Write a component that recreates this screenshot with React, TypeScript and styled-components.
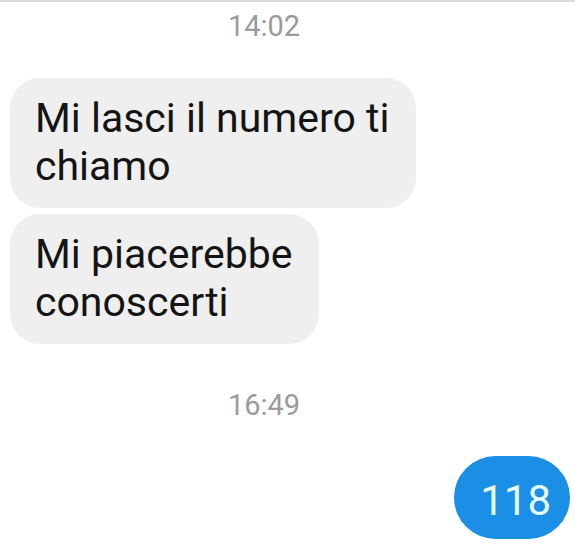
import React from "react";
import styled, { createGlobalStyle } from "styled-components";

type Message = {
  id: number;
  lines: string[];
  mine?: boolean;
};

type Group = {
  time: string;
  messages: Message[];
};

const CHAT: Group[] = [
  {
    time: "14:02",
    messages: [
      { id: 1, lines: ["Mi lasci il numero ti", "chiamo"] },
      { id: 2, lines: ["Mi piacerebbe", "conoscerti"] },
    ],
  },
  {
    time: "16:49",
    messages: [{ id: 3, lines: ["118"], mine: true }],
  },
];

const GlobalStyle = createGlobalStyle`
  html, body {
    margin: 0;
    padding: 0;
    background: #fff;
  }
  body {
    font-family: Roboto, "Liberation Sans", Arial, sans-serif;
  }
`;

const App = () => {
  return (
    <>
      <GlobalStyle />
      <Screen>
        {CHAT.map((group) => (
          <GroupBlock key={group.time}>
            <TimeStamp>{group.time}</TimeStamp>
            <Messages>
              {group.messages.map((msg) => (
                <Bubble key={msg.id} $mine={msg.mine}>
                  {msg.lines.map((line, i) => (
                    <React.Fragment key={i}>
                      {i > 0 && <br />}
                      {line}
                    </React.Fragment>
                  ))}
                </Bubble>
              ))}
            </Messages>
          </GroupBlock>
        ))}
      </Screen>
    </>
  );
};

export default App;

const Screen = styled.div`
  width: 575px;
  height: 552px;
  box-sizing: border-box;
  border-top: 2px solid #dcdcdc;
  padding: 6px 5px 0 10px;
  display: flex;
  flex-direction: column;
  gap: 43px;
  overflow: hidden;
`;

const GroupBlock = styled.section`
  display: flex;
  flex-direction: column;
  gap: 34px;
`;

const TimeStamp = styled.div`
  width: 508px;
  text-align: center;
  font-size: 29px;
  line-height: 36px;
  color: #9b9b9b;
`;

const Messages = styled.div`
  display: flex;
  flex-direction: column;
  gap: 6px;
`;

const Bubble = styled.div<{ $mine?: boolean }>`
  align-self: ${(p) => (p.$mine ? "flex-end" : "flex-start")};
  white-space: nowrap;
  background: ${(p) => (p.$mine ? "#1b8ee6" : "#efefef")};
  color: ${(p) => (p.$mine ? "#e6fcff" : "#141414")};
  font-size: ${(p) => (p.$mine ? "42px" : "41px")};
  line-height: 48px;
  border-radius: ${(p) => (p.$mine ? "42px" : "30px")};
  padding: ${(p) => (p.$mine ? "21px 19px 14px 26px" : "16px 27px 18px 25px")};
  margin-top: ${(p) => (p.$mine ? "-1px" : "0")};
`;
